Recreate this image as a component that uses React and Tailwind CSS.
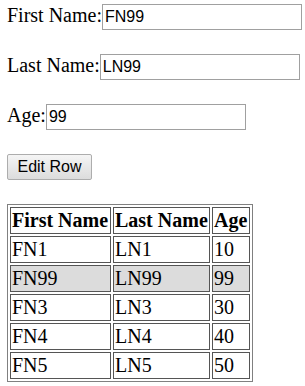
import React from 'react';

const ROWS = [
  { first: 'FN1', last: 'LN1', age: '10' },
  { first: 'FN99', last: 'LN99', age: '99', selected: true },
  { first: 'FN3', last: 'LN3', age: '30' },
  { first: 'FN4', last: 'LN4', age: '40' },
  { first: 'FN5', last: 'LN5', age: '50' },
];

function Field({ label, value, className }) {
  return (
    <div className={`flex items-baseline ${className}`}>
      <span className="leading-[23px]">{label}</span>
      <input
        readOnly
        value={value}
        className="w-[200px] h-[26px] border border-[#a0a0a0] bg-white px-[2px] text-[16px] text-black outline-none font-['Liberation_Sans',Arial,sans-serif]"
      />
    </div>
  );
}

export default function App() {
  return (
    <div className="min-h-screen bg-white text-black text-[20px] pl-[7px] font-['Liberation_Serif','Times_New_Roman',serif]">
      <Field label="First Name:" value="FN99" className="pt-[4px]" />
      <Field label="Last Name:" value="LN99" className="mt-[24px]" />
      <Field label="Age:" value="99" className="mt-[24px]" />

      <button className="mt-[24px] block w-[85px] h-[26px] rounded-[2px] border border-[#adadad] bg-gradient-to-b from-[#f5f5f5] to-[#dcdcdc] text-[16px] text-black font-['Liberation_Sans',Arial,sans-serif]">
        Edit Row
      </button>

      <table className="mt-[24px] border-separate border-spacing-[2px] border border-[#808080] leading-[23px]">
        <thead>
          <tr>
            <th className="w-[101px] border border-[#555] p-[1px] text-left font-bold">First Name</th>
            <th className="w-[97px] border border-[#555] p-[1px] text-left font-bold">Last Name</th>
            <th className="w-[38px] border border-[#555] p-[1px] text-left font-bold">Age</th>
          </tr>
        </thead>
        <tbody>
          {ROWS.map((r) => (
            <tr key={r.first} className={r.selected ? 'bg-[#dcdcdc]' : ''}>
              <td className="border border-[#555] p-[1px]">{r.first}</td>
              <td className="border border-[#555] p-[1px]">{r.last}</td>
              <td className="border border-[#555] p-[1px]">{r.age}</td>
            </tr>
          ))}
        </tbody>
      </table>
    </div>
  );
}
